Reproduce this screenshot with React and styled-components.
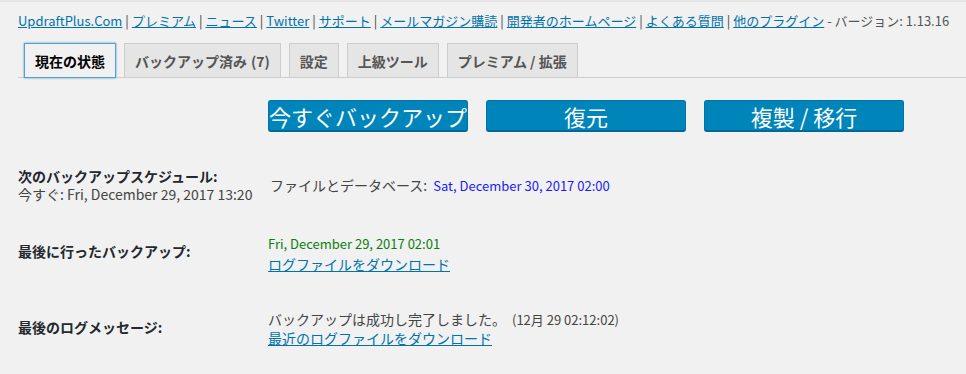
import styled, { createGlobalStyle } from "styled-components";

const Global = createGlobalStyle`
  body {
    margin: 0;
    background: #f1f1f1;
    font-family: "Noto Sans CJK JP", "Noto Sans", sans-serif;
    color: #444;
  }
`;

const Page = styled.div`
  border-top: 2px solid #e4e4e4;
  background: #f1f1f1;
  height: 372px;
  overflow: hidden;
`;

const Wrap = styled.div`
  padding-left: 18px;
`;

const LinkLine = styled.div`
  margin-top: 10px;
  font-size: 13px;
  line-height: 18px;
  white-space: nowrap;
  color: #555;
`;

const A = styled.a`
  color: #0073aa;
  text-decoration: underline;
`;

const Sep = styled.span`
  color: #444;
  margin: 0 3px;
`;

const Tabs = styled.div`
  display: flex;
  margin-top: 12px;
  border-bottom: 1px solid #ccc;
  height: 35px;
  align-items: flex-end;
`;

const Tab = styled.div`
  box-sizing: border-box;
  height: 35px;
  margin-left: ${(p) => (p.first ? "6px" : "8px")};
  margin-bottom: -1px;
  padding: 0 10px;
  display: flex;
  align-items: center;
  font-size: 14px;
  font-weight: 700;
  white-space: nowrap;
  background: ${(p) => (p.active ? "#f1f1f1" : "#e5e5e5")};
  color: ${(p) => (p.active ? "#000" : "#555")};
  border: 1px solid ${(p) => (p.active ? "#5b9dd9" : "#ccc")};
  box-shadow: ${(p) => (p.active ? "0 0 2px rgba(30,140,190,0.8)" : "none")};
`;

const Count = styled.span`
  font-weight: 600;
  margin-left: 4px;
`;

const Row = styled.div`
  display: grid;
  grid-template-columns: 250px 1fr;
  align-items: center;
  margin-top: ${(p) => p.top};
  height: ${(p) => p.h};
`;

const Label = styled.div`
  font-size: 14px;
  line-height: 18px;
  font-weight: 700;
  color: #23282d;
  margin-top: ${(p) => p.shift || "0"};
`;

const Sub = styled.div`
  font-weight: 400;
  color: #444;
  font-size: 14px;
`;

const Value = styled.div`
  font-size: 14px;
  line-height: ${(p) => p.lh || "18px"};
  color: #444;
  padding-left: ${(p) => p.indent || "0"};
`;

const Buttons = styled.div`
  display: flex;
  gap: 18px;
`;

const BigButton = styled.button`
  width: 200px;
  height: 32px;
  padding: 0;
  box-sizing: border-box;
  background: #0085ba;
  border: 1px solid #0073aa;
  border-bottom-color: #006799;
  box-shadow: inset 0 -1px 0 #006799;
  border-radius: 3px;
  color: #fff;
  font-family: "Noto Sans CJK JP", sans-serif;
  font-size: 22px;
  line-height: 28px;
  white-space: nowrap;
  overflow: hidden;
`;

const Colored = styled.span`
  color: ${(p) => p.c};
  font-size: 13px;
  margin-left: ${(p) => p.ml || "0"};
`;

const Small = styled.span`
  font-size: 13px;
  margin-left: 6px;
`;

const links = [
  "UpdraftPlus.Com",
  "プレミアム",
  "ニュース",
  "Twitter",
  "サポート",
  "メールマガジン購読",
  "開発者のホームページ",
  "よくある質問",
  "他のプラグイン",
];

const tabs = ["現在の状態", "バックアップ済み", "設定", "上級ツール", "プレミアム / 拡張"];

export default function App() {
  return (
    <Page>
      <Global />
      <Wrap>
        <LinkLine>
          {links.map((l, i) => (
            <span key={l}>
              {i > 0 && <Sep>|</Sep>}
              <A href="#">{l}</A>
            </span>
          ))}
          <span> - バージョン: 1.13.16</span>
        </LinkLine>
        <Tabs>
          {tabs.map((t, i) => (
            <Tab key={t} first={i === 0} active={i === 0}>
              {t}
              {i === 1 && <Count>(7)</Count>}
            </Tab>
          ))}
        </Tabs>
        <Row top="22px" h="32px">
          <div />
          <Buttons>
            <BigButton>今すぐバックアップ</BigButton>
            <BigButton>復元</BigButton>
            <BigButton>複製 / 移行</BigButton>
          </Buttons>
        </Row>
        <Row top="35px" h="36px">
          <Label>
            次のバックアップスケジュール:
            <Sub>今すぐ: Fri, December 29, 2017 13:20</Sub>
          </Label>
          <Value indent="2px">
            ファイルとデータベース:
            <Colored c="#1a1aff" ml="6px">Sat, December 30, 2017 02:00</Colored>
          </Value>
        </Row>
        <Row top="30px" h="42px">
          <Label shift="-6px">最後に行ったバックアップ:</Label>
          <Value lh="21px">
            <Colored c="#0a800a">Fri, December 29, 2017 02:01</Colored>
            <br />
            <A href="#">ログファイルをダウンロード</A>
          </Value>
        </Row>
        <Row top="35px" h="36px">
          <Label shift="-3px">最後のログメッセージ:</Label>
          <Value>
            バックアップは成功し完了しました。<Small>(12月 29 02:12:02)</Small>
            <br />
            <A href="#">最近のログファイルをダウンロード</A>
          </Value>
        </Row>
      </Wrap>
    </Page>
  );
}
